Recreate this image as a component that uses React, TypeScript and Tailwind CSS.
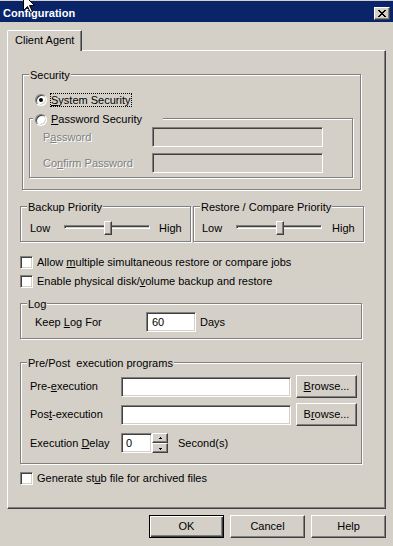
import type { ReactNode } from "react"

const sunken =
  "border border-t-[#808080] border-l-[#808080] border-b-white border-r-white shadow-[inset_1px_1px_0_#404040,inset_-1px_-1px_0_#d4d0c8]"
const raised =
  "border border-t-white border-l-white border-b-[#404040] border-r-[#404040] shadow-[inset_-1px_-1px_0_#808080]"
const etched = "border border-[#808080] shadow-[inset_1px_1px_0_#fff,1px_1px_0_#fff]"
const disabled = "text-[#808080] [text-shadow:1px_1px_0_#fff]"

const U = ({ children }: { children: ReactNode }) => (
  <u className="[text-decoration-skip-ink:none]">{children}</u>
)

interface GroupProps {
  label: ReactNode
  className: string
  children?: ReactNode
}

const Group = ({ label, className, children }: GroupProps) => (
  <div className={"relative shrink-0 " + etched + " " + className}>
    <div className="absolute left-[6px] top-[-6px] whitespace-nowrap bg-[#d4d0c8] px-[1px]">{label}</div>
    {children}
  </div>
)

const Radio = ({ checked }: { checked?: boolean }) => (
  <span className={"relative block h-[12px] w-[12px] shrink-0 rounded-full bg-white " + sunken}>
    {checked && <span className="absolute left-[3px] top-[3px] h-[4px] w-[4px] rounded-full bg-black" />}
  </span>
)

const Check = ({ children, className }: { children: ReactNode; className: string }) => (
  <div className={"ml-[12px] flex h-[13px] items-center gap-[4px] " + className}>
    <span className={"block h-[13px] w-[13px] shrink-0 bg-white " + sunken} />
    <span className="whitespace-nowrap">{children}</span>
  </div>
)

const Slider = () => (
  <div className="relative h-[16px] w-[86px] shrink-0">
    <div className={"absolute left-0 right-0 top-[5px] h-[4px] " + sunken} />
    <div className={"absolute left-[40px] top-[1px] h-[14px] w-[8px] bg-[#d4d0c8] " + raised} />
  </div>
)

const Button = ({ children, isDefault, className }: { children: ReactNode; isDefault?: boolean; className: string }) => (
  <div
    className={
      "flex shrink-0 items-center justify-center bg-[#d4d0c8] " +
      (isDefault
        ? "border border-black shadow-[inset_1px_1px_0_#fff,inset_-1px_-1px_0_#404040,inset_-2px_-2px_0_#808080] "
        : raised + " ") +
      className
    }
  >
    {children}
  </div>
)

const Arrow = ({ up }: { up?: boolean }) => (
  <svg width="5" height="3" shapeRendering="crispEdges">
    {up ? (
      <>
        <rect x="2" y="0" width="1" height="1" fill="#000" />
        <rect x="1" y="1" width="3" height="1" fill="#000" />
      </>
    ) : (
      <>
        <rect x="1" y="1" width="3" height="1" fill="#000" />
        <rect x="2" y="2" width="1" height="1" fill="#000" />
      </>
    )}
  </svg>
)

const CloseGlyph = () => (
  <svg width="8" height="7" shapeRendering="crispEdges">
    {[
      [0, 0, 2], [6, 0, 2],
      [1, 1, 2], [5, 1, 2],
      [2, 2, 4],
      [3, 3, 2],
      [2, 4, 4],
      [1, 5, 2], [5, 5, 2],
      [0, 6, 2], [6, 6, 2],
    ].map(([x, y, w], i) => (
      <rect key={i} x={x} y={y} width={w} height="1" fill="#000" />
    ))}
  </svg>
)

export default function App() {
  return (
    <div className="relative h-[546px] w-[393px] overflow-hidden bg-[#d4d0c8] font-['Liberation_Sans',Arial,sans-serif] text-[11px] leading-[13px] text-black">
      {/* title bar */}
      <div className="mt-[1px] flex h-[21px] justify-between bg-[#0a246a]">
        <div className="pl-[3px] pt-[6px] font-bold text-white">Configuration</div>
        <div className={"mr-[3px] mt-[6px] flex h-[13px] w-[16px] items-center justify-center bg-[#d4d0c8] " + raised}>
          <CloseGlyph />
        </div>
      </div>

      {/* tabs */}
      <div className="mt-[8px] flex pl-[7px]">
        <div className="relative z-10 -mb-px h-[21px] w-[75px] rounded-tl-[2px] border-l border-r border-t border-l-white border-r-[#404040] border-t-white bg-[#d4d0c8] pl-[7px] pt-[3px] shadow-[inset_-1px_0_0_#808080]">
          Client Agent
        </div>
      </div>

      <div className="ml-[7px] flex h-[459px] w-[379px] flex-col items-start border border-b-[#404040] border-l-white border-r-[#404040] border-t-white shadow-[inset_-1px_-1px_0_#808080]">
        <Group label="Security" className="ml-[14px] mt-[23px] h-[116px] w-[339px]">
          <div className="ml-[12px] mt-[18px] flex h-[14px] items-center">
            <Radio checked />
            <span className="ml-[3px] border border-dotted border-black pr-[1px] leading-[12px]">
              <U>S</U>ystem Security
            </span>
          </div>
          <div className={"relative ml-[6px] mt-[11px] h-[60px] w-[324px] " + etched}>
            <div className="absolute left-[3px] top-[-6px] flex h-[13px] w-[130px] items-center gap-[4px] bg-[#d4d0c8] px-[2px]">
              <Radio />
              <span className="whitespace-nowrap">
                <U>P</U>assword Security
              </span>
            </div>
            <div className="mt-[8px] flex items-center pl-[13px]">
              <span className={"w-[109px] " + disabled}>
                P<U>a</U>ssword
              </span>
              <span className={"block h-[20px] w-[171px] bg-[#d4d0c8] " + sunken} />
            </div>
            <div className="mt-[6px] flex items-center pl-[13px]">
              <span className={"w-[109px] " + disabled}>
                Co<U>n</U>firm Password
              </span>
              <span className={"block h-[20px] w-[171px] bg-[#d4d0c8] " + sunken} />
            </div>
          </div>
        </Group>

        <div className="ml-[12px] mt-[16px] flex gap-[2px]">
          <Group label="Backup Priority" className="h-[36px] w-[171px]">
            <div className="mt-[13px] flex h-[16px] items-center pl-[9px]">
              <span className="w-[34px]">Low</span>
              <Slider />
              <span className="ml-[9px]">High</span>
            </div>
          </Group>
          <Group label="Restore / Compare Priority" className="h-[36px] w-[171px]">
            <div className="mt-[13px] flex h-[16px] items-center pl-[8px]">
              <span className="w-[34px]">Low</span>
              <Slider />
              <span className="ml-[10px]">High</span>
            </div>
          </Group>
        </div>

        <Check className="mt-[14px]">
          Allow <U>m</U>ultiple simultaneous restore or compare jobs
        </Check>
        <Check className="mt-[6px]">
          Enable physical disk/<U>v</U>olume backup and restore
        </Check>

        <Group label="Log" className="ml-[12px] mt-[15px] h-[36px] w-[342px]">
          <div className="mt-[8px] flex h-[20px] items-center pl-[14px]">
            <span className="w-[111px]">
              Keep <U>L</U>og For
            </span>
            <span className={"flex h-[20px] w-[50px] items-center bg-white pl-[5px] " + sunken}>60</span>
            <span className="ml-[4px]">Days</span>
          </div>
        </Group>

        <Group label="Pre/Post&nbsp; execution programs" className="ml-[12px] mt-[23px] h-[102px] w-[342px]">
          <div className="mt-[12px] flex h-[23px] items-center pl-[9px]">
            <span className="w-[91px]">
              Pre-<U>e</U>xecution
            </span>
            <span className={"block h-[20px] w-[170px] bg-white " + sunken} />
            <Button className="ml-[5px] h-[23px] w-[61px]">
              <span>
                <U>B</U>rowse...
              </span>
            </Button>
          </div>
          <div className="mt-[5px] flex h-[23px] items-center pl-[9px]">
            <span className="w-[91px]">
              Pos<U>t</U>-execution
            </span>
            <span className={"block h-[20px] w-[170px] bg-white " + sunken} />
            <Button className="ml-[5px] h-[23px] w-[61px]">
              <span>
                B<U>r</U>owse...
              </span>
            </Button>
          </div>
          <div className="mt-[7px] flex h-[20px] items-center pl-[9px]">
            <span className="w-[91px]">
              Execution <U>D</U>elay
            </span>
            <span className={"flex h-[20px] w-[31px] items-center bg-white pl-[4px] " + sunken}>0</span>
            <div className="flex h-[20px] w-[16px] flex-col">
              <span className={"flex flex-1 items-center justify-center bg-[#d4d0c8] " + raised}>
                <Arrow up />
              </span>
              <span className={"flex flex-1 items-center justify-center bg-[#d4d0c8] " + raised}>
                <Arrow />
              </span>
            </div>
            <span className="ml-[10px]">Second(s)</span>
          </div>
        </Group>

        <Check className="mt-[8px]">
          Generate st<U>u</U>b file for archived files
        </Check>
      </div>

      {/* dialog buttons */}
      <div className="mt-[6px] flex justify-end gap-[6px] pr-[7px]">
        <Button isDefault className="h-[23px] w-[75px]">OK</Button>
        <Button className="h-[23px] w-[75px]">Cancel</Button>
        <Button className="h-[23px] w-[75px]">Help</Button>
      </div>

      {/* mouse pointer */}
      <svg className="absolute left-[23px] top-[-6px]" width="13" height="20" viewBox="0 0 13 20">
        <path d="M0.5 0.5 L0.5 16.5 L4.5 12.5 L7.5 18.5 L9.5 17.5 L6.5 11.5 L11.5 11.5 Z" fill="#fff" stroke="#000" strokeWidth="1" />
      </svg>
    </div>
  )
}
